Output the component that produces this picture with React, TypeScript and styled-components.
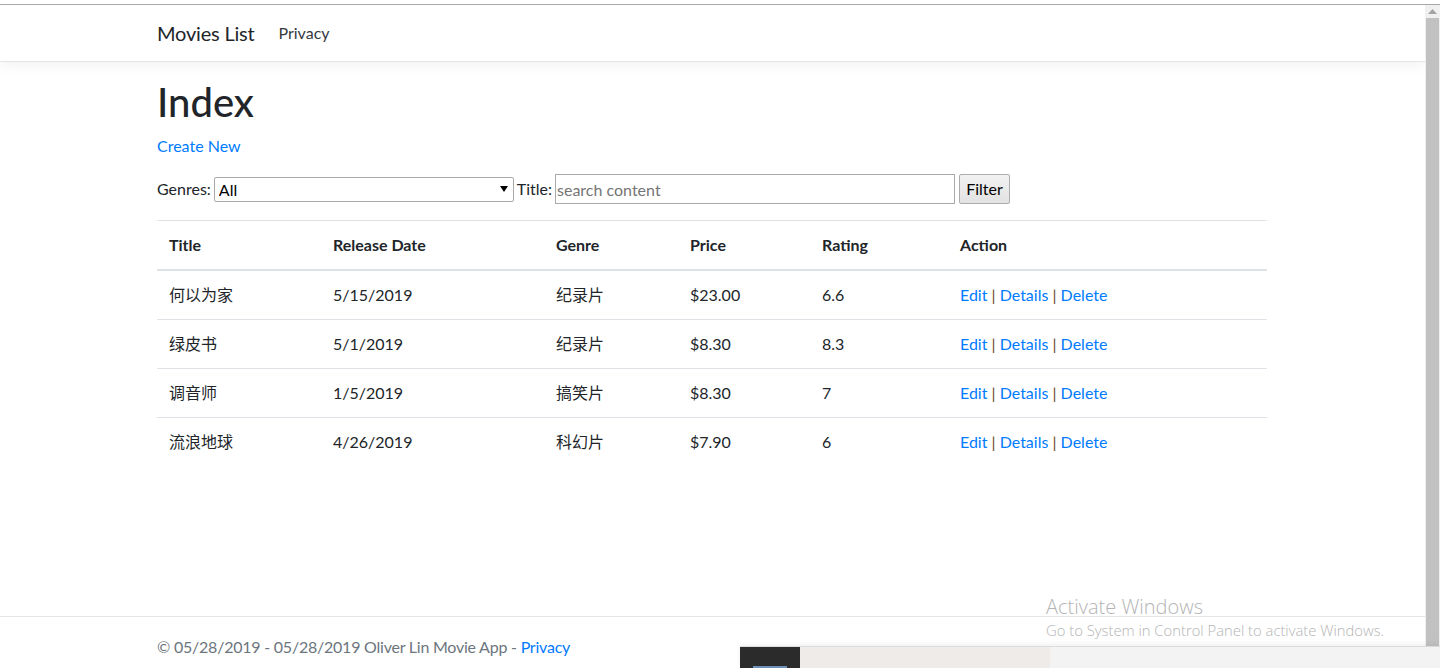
import React from "react";
import styled, { createGlobalStyle } from "styled-components";

const GlobalStyle = createGlobalStyle`
  html, body { margin: 0; padding: 0; background: #fff; }
  body {
    font-family: Lato, "Noto Sans CJK SC", sans-serif;
    font-size: 16px;
    line-height: 1.5;
    color: #212529;
  }
  * { box-sizing: border-box; }
`;

const Frame = styled.div`
  position: relative;
  width: 1440px;
  height: 668px;
  overflow: hidden;
  display: flex;
  flex-direction: column;
  background: #fff;
`;

const TopEdge = styled.div`
  height: 5px;
  flex: 0 0 5px;
  border-bottom: 1px solid #a8a8a8;
  background: #fff;
`;

const Body = styled.div`
  flex: 1;
  display: flex;
  min-height: 0;
`;

const Page = styled.div`
  flex: 1;
  display: grid;
  grid-template-rows: 57px 554px 60px;
  overflow: hidden;
`;

const Navbar = styled.nav`
  background: #fff;
  border-bottom: 1px solid #e5e5e5;
  box-shadow: 0 4px 12px rgba(0, 0, 0, 0.05);
  position: relative;
  z-index: 1;
`;

const Container = styled.div`
  width: 1110px;
  margin: 0 158px 0 157px;
`;

const NavInner = styled(Container)`
  display: flex;
  align-items: center;
  height: 56px;
`;

const Brand = styled.a`
  font-size: 20px;
  line-height: 30px;
  color: #212529;
  margin-right: 16px;
  text-decoration: none;
  letter-spacing: -0.2px;
`;

const NavLink = styled.a`
  padding: 8px;
  font-size: 16px;
  color: #343a40;
  text-decoration: none;
`;

const Main = styled(Container)`
  padding-top: 16px;
`;

const Heading = styled.h1`
  font-size: 40px;
  font-weight: 500;
  line-height: 1.2;
  margin: 0 0 8px;
`;

const Para = styled.p`
  margin: 0 0 16px;
`;

const Link = styled.a`
  color: #007bff;
  text-decoration: none;
`;

const FilterRow = styled.form`
  display: flex;
  align-items: center;
  gap: 3px;
  height: 30px;
  margin-bottom: 16px;
`;

const Label = styled.span`
  font-size: 16px;
`;

const SelectWrap = styled.div`
  position: relative;
  width: 300px;
  height: 25px;
`;

const Select = styled.select`
  appearance: none;
  width: 100%;
  height: 100%;
  border: 1px solid #a9a9a9;
  border-radius: 2px;
  background: #fff;
  font: inherit;
  font-size: 16px;
  line-height: 23px;
  padding: 0 0 0 4px;
  color: #000;
`;

const Caret = styled.svg`
  position: absolute;
  right: 6px;
  top: 9px;
  pointer-events: none;
`;

const TextInput = styled.input`
  width: 400px;
  height: 30px;
  border: 1px solid #a9a9a9;
  padding: 0 1px;
  font: inherit;
  font-size: 16px;
  color: #000;
  &::placeholder { color: #757575; }
`;

const Button = styled.button`
  height: 30px;
  width: 51px;
  margin-left: 1px;
  border: 1px solid #adadad;
  border-radius: 2px;
  background: linear-gradient(#f2f2f2, #e2e2e2);
  font: inherit;
  font-size: 16px;
  color: #000;
  padding: 0;
`;

const Table = styled.table`
  width: 1110px;
  border-collapse: collapse;
  table-layout: fixed;
`;

const Col = styled.col<{ $w: number }>`
  width: ${(p) => p.$w}px;
`;

const Th = styled.th`
  text-align: left;
  font-weight: 700;
  padding: 12px;
  line-height: 24px;
  border-top: 1px solid #dee2e6;
  border-bottom: 2px solid #dee2e6;
`;

const Td = styled.td`
  padding: 12px;
  line-height: 24px;
  border-top: 1px solid #dee2e6;
  vertical-align: top;
`;

const Sep = styled.span`
  color: #6b4a2a;
`;

const Footer = styled.footer`
  border-top: 1px solid #e5e5e5;
  line-height: 60px;
  color: #6c757d;
  white-space: nowrap;
  letter-spacing: -0.23px;
`;

const Scrollbar = styled.div`
  width: 15px;
  flex: 0 0 15px;
  background: #f0f0f0;
  display: flex;
  flex-direction: column;
  align-items: center;
  padding-top: 4px;
`;

const ScrollArrow = styled.svg`
  flex: 0 0 auto;
  margin-bottom: 4px;
`;

const Thumb = styled.div`
  width: 13px;
  flex: 1;
  background: #c1c1c1;
`;

const Watermark = styled.div`
  position: absolute;
  left: 1046px;
  top: 594px;
  color: #b4b4b4;
  font-family: "Open Sans", sans-serif;
  font-weight: 300;
  pointer-events: none;
`;

const WmTitle = styled.div`
  font-size: 20px;
  line-height: 26px;
`;

const WmSub = styled.div`
  font-size: 14.8px;
  line-height: 20px;
`;

const Taskbar = styled.div`
  position: absolute;
  left: 740px;
  top: 646px;
  width: 700px;
  height: 22px;
  display: flex;
  background: #f3f3f3;
  border-top: 1px solid #dcdcdc;
  box-shadow: 0 -2px 6px rgba(0, 0, 0, 0.06);
`;

const TaskIcon = styled.div`
  width: 60px;
  background: #2b2b2b;
  position: relative;
`;

const TaskIconInner = styled.div`
  position: absolute;
  left: 13px;
  bottom: 0;
  width: 34px;
  height: 2px;
  background: #6d8fb5;
`;

const TaskPane = styled.div`
  width: 250px;
  background: #eeebe8;
`;

const movies = [
  { title: "何以为家", date: "5/15/2019", genre: "纪录片", price: "$23.00", rating: "6.6" },
  { title: "绿皮书", date: "5/1/2019", genre: "纪录片", price: "$8.30", rating: "8.3" },
  { title: "调音师", date: "1/5/2019", genre: "搞笑片", price: "$8.30", rating: "7" },
  { title: "流浪地球", date: "4/26/2019", genre: "科幻片", price: "$7.90", rating: "6" },
];

export default function App() {
  return (
    <>
      <GlobalStyle />
      <Frame>
        <TopEdge />
        <Body>
          <Page>
            <Navbar>
              <NavInner>
                <Brand href="#">Movies List</Brand>
                <NavLink href="#">Privacy</NavLink>
              </NavInner>
            </Navbar>
            <Main>
              <Heading>Index</Heading>
              <Para>
                <Link href="#">Create New</Link>
              </Para>
              <FilterRow onSubmit={(e) => e.preventDefault()}>
                <Label>Genres:</Label>
                <SelectWrap>
                  <Select defaultValue="All">
                    <option>All</option>
                  </Select>
                  <Caret width="8" height="6" viewBox="0 0 8 6">
                    <path d="M0 0h8L4 6z" fill="#000" />
                  </Caret>
                </SelectWrap>
                <Label>Title:</Label>
                <TextInput placeholder="search content" />
                <Button type="submit">Filter</Button>
              </FilterRow>
              <Table>
                <colgroup>
                  <Col $w={164} />
                  <Col $w={223} />
                  <Col $w={134} />
                  <Col $w={132} />
                  <Col $w={138} />
                  <Col $w={319} />
                </colgroup>
                <thead>
                  <tr>
                    <Th>Title</Th>
                    <Th>Release Date</Th>
                    <Th>Genre</Th>
                    <Th>Price</Th>
                    <Th>Rating</Th>
                    <Th>Action</Th>
                  </tr>
                </thead>
                <tbody>
                  {movies.map((m) => (
                    <tr key={m.title}>
                      <Td>{m.title}</Td>
                      <Td>{m.date}</Td>
                      <Td>{m.genre}</Td>
                      <Td>{m.price}</Td>
                      <Td>{m.rating}</Td>
                      <Td>
                        <Link href="#">Edit</Link> <Sep>|</Sep>{" "}
                        <Link href="#">Details</Link> <Sep>|</Sep>{" "}
                        <Link href="#">Delete</Link>
                      </Td>
                    </tr>
                  ))}
                </tbody>
              </Table>
            </Main>
            <Footer>
              <Container>
                © 05/28/2019 - 05/28/2019 Oliver Lin Movie App - <Link href="#">Privacy</Link>
              </Container>
            </Footer>
          </Page>
          <Scrollbar>
            <ScrollArrow width="9" height="5" viewBox="0 0 9 5">
              <path d="M0 5L4.5 0L9 5z" fill="#a3a3a3" />
            </ScrollArrow>
            <Thumb />
          </Scrollbar>
        </Body>
        <Watermark>
          <WmTitle>Activate Windows</WmTitle>
          <WmSub>Go to System in Control Panel to activate Windows.</WmSub>
        </Watermark>
        <Taskbar>
          <TaskIcon>
            <TaskIconInner />
          </TaskIcon>
          <TaskPane />
        </Taskbar>
      </Frame>
    </>
  );
}
